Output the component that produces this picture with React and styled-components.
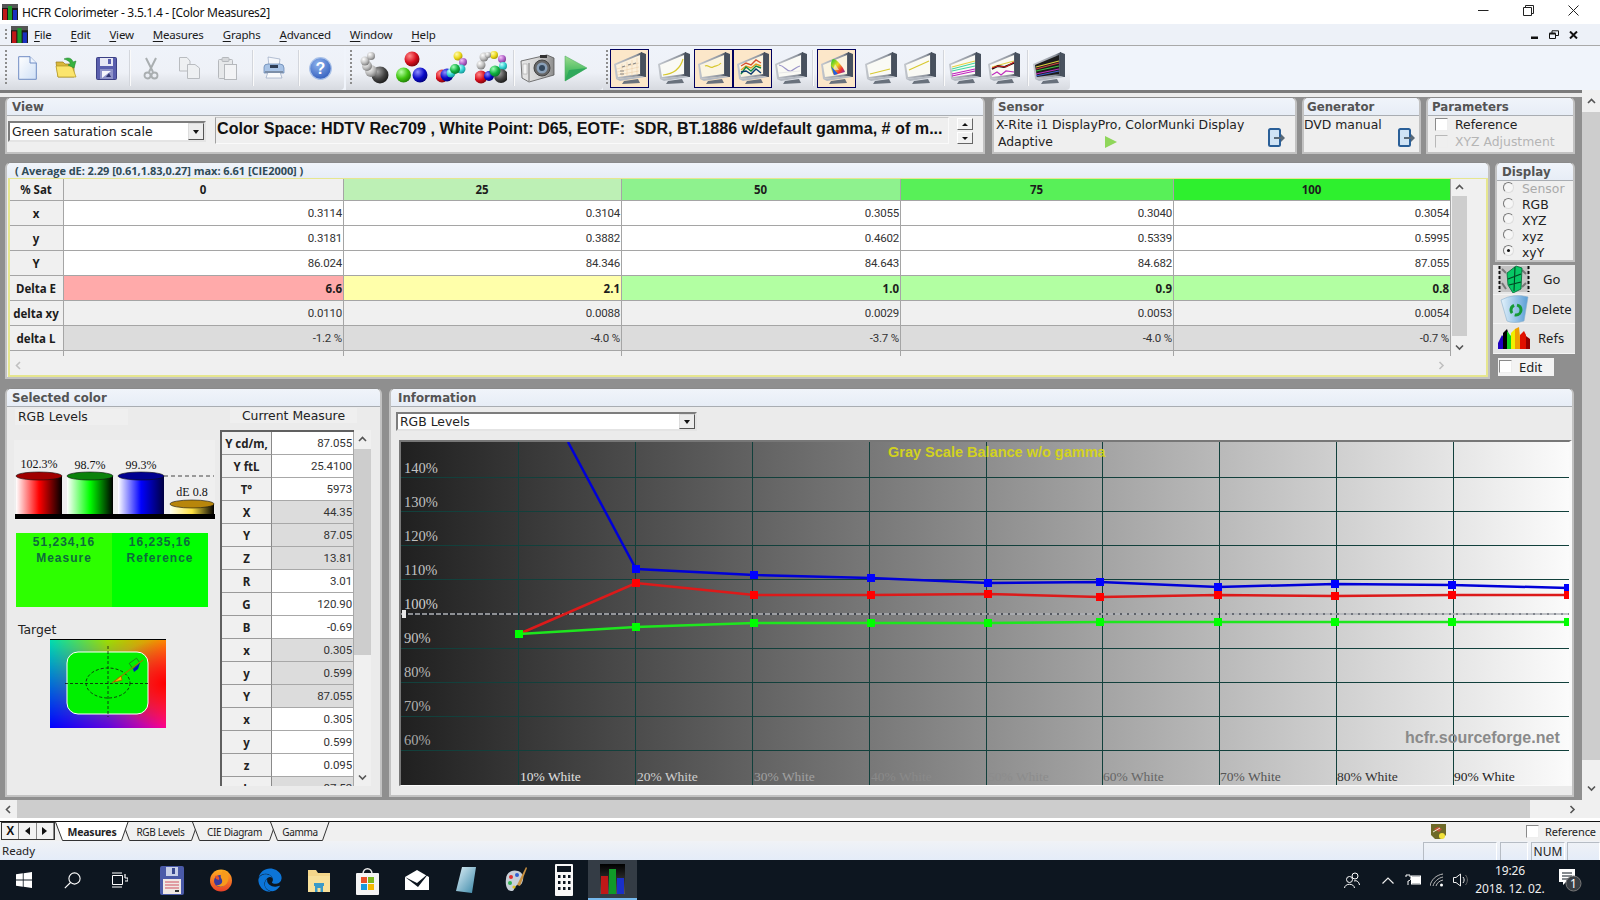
import React from "react";
import styled, { createGlobalStyle } from "styled-components";
import { FaEdge } from "react-icons/fa";

const Global = createGlobalStyle`
  html, body { margin: 0; padding: 0; background: #fff; }
  body { font-family: "Noto Sans", "Liberation Sans", sans-serif; color: #111; }
  * { box-sizing: border-box; }
`;

const SEGOE = `"Noto Sans", "Open Sans", sans-serif`;
const ROBOTO = `Roboto, "Noto Sans", sans-serif`;
const VERDANA = `"DejaVu Sans", "Liberation Sans", sans-serif`;

const Window = styled.div`
  width: 1600px; height: 900px; display: flex; flex-direction: column; overflow: hidden; background: #fff;
`;
const TitleBar = styled.div`
  height: 24px; flex: none; display: flex; align-items: center; background: #fff; padding-left: 2px;
`;
const TitleText = styled.span`
  font: 12px ${SEGOE}; margin-left: 4px; color: #111; letter-spacing: -0.28px; white-space: pre;
`;
const WinCtrls = styled.div`
  margin-left: auto; display: flex; align-items: center; height: 100%; padding-right: 4px;
`;
const WinCtrl = styled.div`
  width: 45px; height: 100%; display: flex; align-items: center; justify-content: center; margin-top: -4px;
`;
const MenuBar = styled.div`
  height: 22px; flex: none; display: flex; align-items: center; background: #edf1f8; border-bottom: 1px solid #a9a9a9; padding-left: 5px;
`;
const Grip = styled.div`
  width: 2px; height: ${p => p.$h}px; margin-left: ${p => p.$ml || 0}px; flex: none;
  background: repeating-linear-gradient(to bottom, #8d8d8d 0 2px, transparent 2px 4px);
`;
const MenuItems = styled.div`
  display: flex; gap: 19px; margin-left: 6px; font: 11.5px ${SEGOE}; color: #1a1a1a; letter-spacing: -0.2px;
  u { text-underline-offset: 2px; }
`;
const MdiCtrls = styled.div`
  margin-left: auto; display: flex; align-items: center; gap: 10px; padding-right: 22px;
`;
const ToolBarRow = styled.div`
  height: 44px; flex: none; display: flex; background: #f0f4fb;
`;
const ToolGroup = styled.div`
  width: ${p => p.$w}px; margin-left: ${p => p.$ml || 0}px; height: 44px; flex: none; display: flex; align-items: center;
  background: linear-gradient(to bottom, #eff3fa 0%, #eef1f7 60%, #d7dae0 100%);
  border-bottom-right-radius: 4px;
`;
const Tool = styled.div`
  width: ${p => p.$w}px; margin-left: ${p => p.$ml || 0}px; flex: none; display: flex; align-items: center; justify-content: center;
  svg { display: block; flex: none; }
`;
const ActiveTool = styled(Tool)`
  height: 39px; background: #fce7c9; border: 1px solid #00005e; margin-top: 0;
`;
const ToolSep = styled.div`
  width: 1px; height: 36px; margin-left: ${p => p.$ml}px; background: #d3d6dc; box-shadow: 1px 0 0 #fafafa; flex: none;
`;
const Workspace = styled.div`
  height: 710px; flex: none; display: flex;
`;
const MainPane = styled.div`
  width: 1582px; flex: none; background: #8f8f8f; border-top: 3px solid #7b7b7b; display: flex; flex-direction: column;
`;
const TopStrip = styled.div`
  height: 4px; background: #ececec; flex: none;
`;
const Panes = styled.div`
  display: flex; flex-direction: column; padding: 0 7px 0 5px; flex: 1;
`;
const SettingsRow = styled.div`
  display: flex; height: 57px; flex: none;
`;
const Panel = styled.div`
  width: ${p => p.$w}px; margin-left: ${p => p.$ml || 0}px; flex: none; display: flex; flex-direction: column;
  background: #efefef; border: 2px solid #c2c2c2; border-top: 1px solid #8a8a8a; border-radius: 6px 6px 0 0; overflow: hidden;
`;
const PanelHead = styled.div`
  height: 18px; flex: none; background: linear-gradient(to bottom, #f0f4fa, #e7edf6); border-bottom: 1px solid #a9adb2;
  font: bold 11.8px ${VERDANA}; color: #545454; padding: 2px 0 0 ${p => p.$pad ?? 5}px; line-height: 14px; white-space: pre;
`;
const ViewBody = styled.div`
  flex: 1; display: flex; padding: 5px 0 0 0; position: relative;
`;
const Combo = styled.div`
  width: ${p => p.$w}px; height: ${p => p.$h}px; flex: none; display: flex; align-items: center; background: #fff;
  border: 2px solid #7d7d7d; border-right-color: #e4e4e4; border-bottom-color: #e4e4e4;
  font: 12.4px ${VERDANA}; color: #222; padding-left: 2px; margin-left: ${p => p.$ml || 0}px; margin-top: ${p => p.$mt || 0}px;
`;
const ComboArrow = styled.div`
  margin-left: auto; width: 16px; height: 100%; flex: none; background: #ececec; border: 1px solid #555; border-top-color: #ddd; border-left-color: #ddd;
  display: flex; align-items: center; justify-content: center;
  &::after { content: ""; border-left: 3px solid transparent; border-right: 3px solid transparent; border-top: 4px solid #111; }
`;
const Readout = styled.div`
  width: 734px; height: 27px; margin-left: 9px; margin-top: -4px; flex: none; border-left: 1px solid #a0a0a0; border-top: 1px solid #c8c8c8; border-bottom: 1px solid #fafafa; border-right: 1px solid #fafafa;
  font: bold 16.15px "Liberation Sans", Arial, sans-serif; color: #111; padding: 0 0 0 1px; line-height: 20px; white-space: pre; overflow: hidden;
`;
const Spin = styled.div`
  display: flex; flex-direction: column; gap: 2px; margin-left: 8px; width: 16px; flex: none; margin-top: -3px;
`;
const SpinBtn = styled.div`
  height: 12px; background: #f1f1f1; border: 1px solid #fff; border-right-color: #666; border-bottom-color: #666;
  display: flex; align-items: center; justify-content: center;
  &::after {
    content: ""; border-left: 3px solid transparent; border-right: 3px solid transparent;
    ${p => (p.$up ? "border-bottom: 3px solid #111;" : "border-top: 3px solid #111;")}
  }
`;
const SmallBody = styled.div`
  flex: 1; position: relative; font: 12.4px ${VERDANA}; color: #222; padding: 0 0 0 ${p => p.$pad ?? 1}px; line-height: 16px;
`;
const Line = styled.div`
  white-space: pre; padding-left: ${p => p.$pl || 0}px; height: ${p => p.$h || 17}px; display: flex; align-items: center;
`;
const Corner = styled.div`
  position: absolute; right: ${p => p.$r ?? 2}px; bottom: 1px;
`;
const Check = styled.span`
  width: 13px; height: 13px; flex: none; display: inline-block; background: ${p => (p.$dim ? "#efefef" : "#fff")};
  border: 1px solid ${p => (p.$dim ? "#b8b8b8" : "#8a8a8a")}; border-right-color: #eee; border-bottom-color: #eee;
`;
const CheckRow = styled.div`
  display: flex; align-items: center; gap: 7px; padding-left: 7px; height: 17px; color: ${p => (p.$dim ? "#b5b5b5" : "#222")};
  font: 12.4px ${VERDANA};
`;
const TableRow = styled.div`
  display: flex; height: 217px; flex: none; margin-top: 8px;
`;
const TableStrip = styled.div`
  height: 15px; flex: none; background: linear-gradient(to bottom, #f0f4fa, #e7edf6);
  font: bold 11px "Open Sans", sans-serif; color: #2f4b57; padding: 1px 0 0 8px; line-height: 13px; white-space: pre; overflow: hidden; letter-spacing: -0.05px;
`;
const YellowFrame = styled.div`
  flex: 1; margin-left: 1px; border: 2px solid #e6e68f; border-top-width: 1px; display: flex; flex-direction: column; background: #f0f0f0; min-height: 0;
`;
const GridWrap = styled.div`
  display: flex; height: 177px; flex: none;
`;
const DataGrid = styled.div`
  width: 1441px; flex: none; display: grid; overflow: hidden; height: 177px;
  grid-template-columns: 54px 280px 278px 279px 273px 277px;
  grid-auto-rows: 25px; grid-template-rows: 22px;
`;
const Cell = styled.div`
  display: flex; align-items: center; justify-content: ${p => (p.$center ? "center" : "flex-end")};
  background: ${p => p.$bg || "#fff"}; padding-right: 1px; white-space: pre;
  border-bottom: 1px solid #a5a5a5; border-right: 1px solid #a5a5a5;
  ${p => (p.$bold
    ? `font: bold 11.5px ${SEGOE}; color: #1c1c1c;`
    : `font: 11.5px ${ROBOTO}; color: #333; letter-spacing: -0.2px;`)}
`;
const VBar = styled.div`
  width: ${p => p.$w || 17}px; flex: none; display: flex; flex-direction: column; align-items: center; background: ${p => p.$bg || "#f0f0f0"};
  margin-left: ${p => p.$ml || 0}px; height: ${p => (p.$h ? p.$h + "px" : "100%")};
`;
const BarArrow = styled.div`
  height: ${p => p.$h || 17}px; width: 100%; flex: none; display: flex; align-items: center; justify-content: center;
  margin-top: ${p => (p.$end ? "auto" : "0")};
`;
const BarThumb = styled.div`
  width: 100%; height: ${p => p.$h}px; background: #cdcdcd; flex: none;
`;
const HBar = styled.div`
  height: ${p => p.$h || 18}px; flex: none; display: flex; align-items: center; background: #f0f0f0;
`;
const HArrow = styled.div`
  width: 17px; height: 100%; flex: none; display: flex; align-items: center; justify-content: center; margin-left: ${p => (p.$end ? "auto" : "0")};
`;
const HThumb = styled.div`
  height: 100%; width: ${p => p.$w}px; background: #cdcdcd; flex: none;
`;
const GridFiller = styled.div`
  flex: 1; background: #f0f0f0;
`;
const SideCol = styled.div`
  width: 82px; margin-left: 3px; flex: none; display: flex; flex-direction: column;
`;
const DisplayPanel = styled(Panel)`
  height: 100px; margin-left: 2px; width: 80px;
`;
const RadioRow = styled.div`
  height: 16px; display: flex; align-items: center; gap: 8px; padding-left: 6px; font: 12.4px ${VERDANA}; color: ${p => (p.$dim ? "#aaa" : "#222")};
`;
const Radio = styled.span`
  width: 11px; height: 11px; border-radius: 50%; flex: none; background: #f6f6f6; border: 1px solid #777; border-right-color: #ddd; border-bottom-color: #ddd;
  display: flex; align-items: center; justify-content: center; margin-top: -3px;
  &::after { content: ""; width: 3px; height: 3px; border-radius: 50%; background: ${p => (p.$on ? "#111" : "transparent")}; }
`;
const SideBtns = styled.div`
  margin-top: 3px; display: flex; flex-direction: column; flex: none;
`;
const SideBtn = styled.div`
  height: 29.5px; background: #e6e6e6; border-bottom: 1px solid #f4f4f4; display: flex; align-items: center; font: 13px ${SEGOE}; color: #222; padding-left: ${p => p.$pl}px; gap: ${p => p.$gap}px;
  svg { flex: none; }
`;
const EditBox = styled.div`
  margin: 4px 0 0 5px; width: 56px; height: 18px; background: #f3f3f3; display: flex; align-items: center; gap: 7px; padding-left: 1px; font: 13px ${SEGOE}; color: #222;
`;
const BottomRow = styled.div`
  display: flex; height: 409px; flex: none; margin-top: 9px;
`;
const LeftBody = styled.div`
  flex: 1; display: flex; background: #ebebeb; min-height: 0;
`;
const LeftCol = styled.div`
  width: 213px; flex: none; padding: 2px 0 0 8px; display: flex; flex-direction: column;
`;
const LevelLabel = styled.div`
  width: 113px; height: 16px; background: #efefef; font: 12.4px ${VERDANA}; color: #222; padding-left: 3px; line-height: 16px;
`;
const CylWrap = styled.div`
  margin-top: 15px; margin-left: -1px; width: 201px; height: 80px; background: #efefef;
  svg { display: block; }
`;
const Swatch = styled.div`
  margin-top: 13px; margin-left: 1px; width: 192px; height: 74px; flex: none; display: flex;
`;
const SwatchHalf = styled.div`
  flex: 1; background: ${p => p.$bg}; display: flex; flex-direction: column; align-items: center; padding-top: 1px;
  font: bold 12px "Liberation Sans", sans-serif; color: #0d6b3c; letter-spacing: 1px; line-height: 16px;
`;
const TargetLabel = styled.div`
  margin-top: 15px; margin-left: 3px; font: 12.4px ${VERDANA}; color: #222; height: 16px; line-height: 16px;
`;
const TargetWrap = styled.div`
  margin-left: 35px; margin-top: 1px; svg { display: block; }
`;
const RightCol = styled.div`
  flex: 1; display: flex; flex-direction: column; padding-top: 1px; min-width: 0;
`;
const MeasureLabel = styled.div`
  width: 127px; height: 15px; margin-left: 10px; background: #efefef; font: 12.4px ${VERDANA}; color: #222; text-align: center; line-height: 15px; white-space: pre;
`;
const MeasureWrap = styled.div`
  margin-top: 7px; display: flex; height: 356px; flex: none; background: #f0f0f0; width: 151px;
`;
const MeasureGrid = styled.div`
  width: 134px; height: 356px; flex: none; overflow: hidden; border-left: 2px solid #606060; border-top: 2px solid #606060;
  display: grid; grid-template-columns: 50px 82px; grid-auto-rows: 23px;
`;
const MeasureHead = styled.div`
  background: #f0f0f0; border-right: 1px solid #8a8a8a; border-bottom: 1px solid #9a9a9a; display: flex; align-items: center; justify-content: center;
  font: bold 11.5px ${SEGOE}; color: #222; white-space: pre;
`;
const MeasureVal = styled.div`
  background: ${p => (p.$grey ? "#dcdcdc" : "#fff")}; border-bottom: 1px solid #a8a8a8; border-right: 1px solid #a8a8a8; display: flex; align-items: center; justify-content: flex-end;
  padding-right: 1px; font: 11.5px ${ROBOTO}; color: #333; letter-spacing: -0.1px;
`;
const InfoBody = styled.div`
  flex: 1; display: flex; flex-direction: column; background: #ebebeb; min-height: 0;
`;
const ChartFrame = styled.div`
  margin: 9px 0 0 8px; height: 346px; flex: none; width: 1173px; border-top: 2px solid #777; border-left: 2px solid #777; border-right: 3px solid #fafafa; background: #fff; border-bottom: 1px solid #fafafa;
`;
const ChartSvg = styled.svg`
  display: block; background: linear-gradient(to right, #202020 0%, #fbfbfb 100%);
`;
const ScrollGap = styled.div`
  height: 3px; flex: none;
`;
const TabBarRow = styled.div`
  height: 20px; flex: none; display: flex; align-items: stretch; background: #f0f0f0; border-top: 1px solid #111;
`;
const NavGroup = styled.div`
  display: flex; margin-left: 1px; height: 18px; border: 1px solid #333; flex: none; width: 54px;
`;
const NavBtn = styled.div`
  flex: 1; border-right: 1px solid #888; display: flex; align-items: center; justify-content: center; background: #f2f2f2; font: bold 12px "Liberation Sans", sans-serif; color: #111;
`;
const TabStrip = styled.div`
  display: flex; margin-left: 0;
`;
const Tab = styled.div`
  position: relative; width: ${p => p.$w}px; margin-left: ${p => p.$ml || 0}px; height: 19px; display: flex; align-items: center; justify-content: center;
  z-index: ${p => (p.$active ? 2 : 1)}; font: ${p => (p.$active ? "bold 10.5px" : "10px")} ${SEGOE}; color: #222; letter-spacing: ${p => (p.$active ? "-0.2px" : "-0.32px")};
  svg { position: absolute; inset: 0; }
  span { position: relative; }
`;
const TabRight = styled.div`
  margin-left: auto; display: flex; align-items: center; width: 169px; flex: none; padding-left: 0;
`;
const TabRefText = styled.span`
  font: 11px ${SEGOE}; color: #222; margin-left: 6px; letter-spacing: -0.1px;
`;
const TabCheck = styled(Check)`
  margin-left: 80px;
`;
const StatusBar = styled.div`
  height: 19px; flex: none; display: flex; align-items: center; background: linear-gradient(to bottom, #f0f2f6, #e4ecf8); font: 11.5px ${SEGOE}; color: #222; padding-left: 2px;
`;
const StatusPanes = styled.div`
  margin-left: auto; display: flex; height: 18px; align-self: flex-end;
`;
const StatusPane = styled.div`
  width: ${p => p.$w}px; margin-left: ${p => p.$ml || 0}px; border-top: 1px solid #b6bcc4; border-left: 1px solid #b6bcc4; border-right: 1px solid #fff; display: flex; align-items: center; justify-content: center;
  font: 12px ${SEGOE}; color: #222;
`;
const TaskBar = styled.div`
  height: 40px; flex: none; display: flex; align-items: center; background: #0d1620;
`;
const TaskSlot = styled.div`
  width: ${p => p.$w}px; height: 40px; flex: none; display: flex; align-items: center; justify-content: center; position: relative;
  background: ${p => (p.$active ? "#343c45" : "transparent")};
  ${p => (p.$active ? "border-bottom: 2px solid #76b9ed;" : "")}
  svg { display: block; }
`;
const Spacer = styled.div`
  width: ${p => p.$w}px; flex: none;
`;
const Tray = styled.div`
  margin-left: auto; display: flex; align-items: center; height: 40px; padding-right: 8px;
`;
const Clock = styled.div`
  width: 76px; display: flex; flex-direction: column; align-items: center; color: #eee; font: 12px ${SEGOE}; line-height: 18px; letter-spacing: -0.1px;
`;

/* ---------- icons ---------- */
const HcfrLogo = ({ s = 16 }) => (
  <svg width={s} height={s} viewBox="0 0 16 16">
    <rect width="16" height="16" fill="#1a1a1a" />
    <rect width="16" height="4" fill="#555" />
    <rect x="1" y="5" width="4" height="11" fill="#c01818" />
    <rect x="6" y="2" width="4" height="14" fill="#1a9a2a" />
    <rect x="11" y="6" width="4" height="10" fill="#1a30c0" />
  </svg>
);
const Chev = ({ d = "up", c = "#555" }) => {
  const paths = { up: "M1 5 L4.5 1.5 L8 5", down: "M1 1.5 L4.5 5 L8 1.5", left: "M5 1 L1.5 4.5 L5 8", right: "M1.5 1 L5 4.5 L1.5 8" };
  const box = d === "up" || d === "down" ? [9, 7] : [7, 9];
  return (
    <svg width={box[0]} height={box[1]} viewBox={`0 0 ${box[0]} ${box[1]}`}>
      <path d={paths[d]} fill="none" stroke={c} strokeWidth="1.6" />
    </svg>
  );
};
const DocIcon = () => (
  <svg width="19" height="24" viewBox="0 0 19 24">
    <defs><linearGradient id="docg" x1="0" y1="0" x2="1" y2="1"><stop offset="0" stopColor="#fff" /><stop offset="1" stopColor="#cfe0f6" /></linearGradient></defs>
    <path d="M.7.7H12L18.3 7V23.3H.7Z" fill="url(#docg)" stroke="#6f8cc4" />
    <path d="M12 .7V7H18.3" fill="#eef4fd" stroke="#6f8cc4" />
  </svg>
);
const FolderIcon = () => (
  <svg width="24" height="22" viewBox="0 0 24 22">
    <path d="M1 5 H8 L10 7 H19 V20 H3Z" fill="#d9b73a" stroke="#9a7d1a" strokeWidth=".7" />
    <path d="M3 20 L1 9 H17 L21 20Z" fill="#fbe56d" stroke="#b2961f" strokeWidth=".7" />
    <path d="M9 2 C13 0 17 1 18 5 L21 4 L19 11 L13 8 L15.5 6.7 C15 4.5 12 3 9 2Z" fill="#37b23f" stroke="#1f7f2a" strokeWidth=".5" />
  </svg>
);
const FloppyIcon = () => (
  <svg width="21" height="23" viewBox="0 0 21 23">
    <rect x=".5" y=".5" width="20" height="22" rx="1" fill="#5a5fae" stroke="#3c4085" />
    <rect x="4" y="1" width="13" height="8" fill="#e8e9f5" />
    <rect x="12" y="2" width="3" height="5" fill="#5a5fae" />
    <rect x="4" y="12" width="13" height="10" fill="#8e92c8" />
    <path d="M6 21 L6 14 H15 Z" fill="#f5f5fb" />
    <path d="M13 16 L15 20 H10Z" fill="#30346f" />
  </svg>
);
const ScissorsIcon = () => (
  <svg width="16" height="23" viewBox="0 0 16 23" fill="none" stroke="#a9aeb0">
    <path d="M3 1 L10 15 M13 1 L6 15" strokeWidth="2" />
    <circle cx="4.5" cy="18.5" r="3" strokeWidth="1.8" />
    <circle cx="11.5" cy="18.5" r="3" strokeWidth="1.8" />
  </svg>
);
const CopyIcon = () => (
  <svg width="21" height="22" viewBox="0 0 21 22" stroke="#b9bcc0" fill="#eef0f2">
    <path d="M.5.5H8L11 4V14H.5Z" />
    <path d="M8.5 7.5H16L20.5 11V21.5H8.5Z" />
  </svg>
);
const PasteIcon = () => (
  <svg width="19" height="23" viewBox="0 0 19 23" stroke="#b5b8bc" fill="#e6e8ea">
    <rect x=".5" y="2.5" width="14" height="19" rx="1" />
    <rect x="4" y=".5" width="7" height="4" rx="1" fill="#d5d7da" />
    <rect x="6.5" y="7.5" width="12" height="15" fill="#f2f3f5" />
  </svg>
);
const PrintIcon = () => (
  <svg width="24" height="24" viewBox="0 0 24 24">
    <path d="M6 1 L18 3 L17 10 H7Z" fill="#f5f7fb" stroke="#8a9ab8" strokeWidth=".6" />
    <path d="M2 11 Q2 8 6 8 H18 Q22 8 22 12 V17 H2Z" fill="#a8c3e6" stroke="#5e7fae" strokeWidth=".7" />
    <rect x="8" y="9" width="8" height="3" fill="#2e3d55" />
    <path d="M6 16 H18 L20 22 H4Z" fill="#f8f9fb" stroke="#8a9ab8" strokeWidth=".6" />
    <rect x="3" y="15" width="18" height="2" fill="#7d8fa8" />
  </svg>
);
const HelpIcon = () => (
  <svg width="23" height="23" viewBox="0 0 23 23">
    <defs><radialGradient id="hg" cx=".4" cy=".3" r=".8"><stop offset="0" stopColor="#8fb4ee" /><stop offset="1" stopColor="#2a56b8" /></radialGradient></defs>
    <circle cx="11.5" cy="11.5" r="10.8" fill="url(#hg)" stroke="#aac2e8" strokeWidth="1.2" />
    <text x="11.5" y="17" textAnchor="middle" fontFamily="Liberation Sans" fontWeight="700" fontSize="16" fill="#fff">?</text>
  </svg>
);
const BallDefs = () => (
  <defs>
    {[["r", "#ff8a8a", "#d80f1e", "#6a0008"], ["g", "#b8ffa8", "#3fc40f", "#1a7005"], ["b", "#8f8fff", "#0a0ac8", "#00006a"], ["w", "#ffffff", "#bcbcbc", "#6c6c6c"], ["k", "#a8a8a8", "#444", "#111"], ["y", "#fffbb0", "#ecd81a", "#9a8a00"], ["m", "#f4c4f8", "#b060c8", "#703080"], ["c", "#c8ffff", "#30d0d0", "#108888"], ["t", "#a0ffb8", "#10b040", "#086828"]].map(([id, a, b, c]) => (
      <radialGradient key={id} id={"ball-" + id} cx=".35" cy=".3" r=".8">
        <stop offset="0" stopColor={a} /><stop offset=".55" stopColor={b} /><stop offset="1" stopColor={c} />
      </radialGradient>
    ))}
  </defs>
);
const Balls = ({ w, items }) => (
  <svg width={w} height="34" viewBox={`0 0 ${w} 34`}>
    <BallDefs />
    {items.map(([k, x, y, r], i) => (
      <circle key={i} cx={x} cy={y} r={r} fill={`url(#ball-${k})`} />
    ))}
  </svg>
);
const CameraIcon = () => (
  <svg width="35" height="30" viewBox="0 0 35 30">
    <defs><linearGradient id="camg" x1="0" y1="0" x2="1" y2="0"><stop offset="0" stopColor="#e8e8e8" /><stop offset=".5" stopColor="#d4d4d4" /><stop offset="1" stopColor="#8c8c8c" /></linearGradient></defs>
    <path d="M1 8 L27 2 L34 5 V22 L9 29 L2 25Z" fill="url(#camg)" stroke="#555" strokeWidth=".8" />
    <path d="M9 10 V28" stroke="#777" />
    <rect x="3" y="11" width="4" height="10" fill="#f4f4f4" stroke="#999" strokeWidth=".5" />
    <circle cx="22" cy="15" r="8" fill="#666" stroke="#444" />
    <circle cx="22" cy="15" r="5.5" fill="#8aa0b8" />
    <circle cx="22" cy="15" r="3" fill="#33475c" />
    <rect x="20" y="2" width="7" height="3" fill="#333" />
  </svg>
);
const PlayIcon = () => (
  <svg width="24" height="27" viewBox="0 0 24 27">
    <defs><linearGradient id="pg" x1="0" y1="0" x2="0" y2="1"><stop offset="0" stopColor="#9ddc8e" /><stop offset=".5" stopColor="#5ac26a" /><stop offset="1" stopColor="#2fa855" /></linearGradient></defs>
    <path d="M1 1 L23 13 L1 26Z" fill="url(#pg)" stroke="#54b26a" strokeWidth=".6" />
    <path d="M1 26 L23 13 L5 15Z" fill="#30a95c" />
  </svg>
);
const Monitor = ({ screen = "#fafaf5", children }) => (
  <svg width="32" height="32" viewBox="0 0 32 32">
    <defs><linearGradient id="monb" x1="0" y1="0" x2="1" y2="0"><stop offset="0" stopColor="#c4c8ce" /><stop offset=".8" stopColor="#8e949e" /><stop offset="1" stopColor="#3e4754" /></linearGradient></defs>
    <path d="M27 0 L32 2 V25 L28 25Z" fill="#48515e" />
    <path d="M0 12 L28 0 V24 L2 27Z" fill="url(#monb)" />
    <path d="M2 13 L26 3 V22 L4 25Z" fill={screen} />
    {children}
    <path d="M2 27 L28 24 L31 25 L6 29Z" fill="#b4bac2" />
    <path d="M10 29 L24 27 L26 31 L8 32Z" fill="#69717c" />
  </svg>
);
const GridLines = () => (
  <g stroke="#e8c8a0" strokeWidth=".5" fill="none">
    <path d="M3 17 L25 11 M3 20 L25 15 M3 23 L25 19 M8 12 V25 M13 10 V24 M18 8 V24 M23 6 V23" />
    <path d="M8 15 l3 -1 M14 13 l3 -1 M19 12 l3 -1" stroke="#888" strokeWidth="1.2" />
    <path d="M6 19 h4 M6 22 h4" stroke="#888" strokeWidth="1.2" />
  </g>
);
const Pl = ({ d, c, w = 1.2 }) => <path d={d} fill="none" stroke={c} strokeWidth={w} />;
const CieShape = () => (
  <g>
    <defs><linearGradient id="cieg" x1="0" y1="0" x2="1" y2="1"><stop offset="0" stopColor="#10c030" /><stop offset=".4" stopColor="#e6e020" /><stop offset=".7" stopColor="#f03030" /><stop offset="1" stopColor="#5030d0" /></linearGradient></defs>
    <path d="M12 7 C16 7 22 15 24 20 L13 23 C9 18 9 10 12 7Z" fill="url(#cieg)" />
    <path d="M12 18 L14 12 L18 18Z" fill="#f4f4f4" opacity=".6" />
    <path d="M10 14 L13 23 L17 22Z" fill="#2060e0" />
  </g>
);
const FilmIcon = () => (
  <svg width="32" height="28" viewBox="0 0 32 28">
    <rect x="1" y="1" width="30" height="26" fill="#c4c4c4" />
    <path d="M1.5 1V27 M30.5 1V27" stroke="#111" strokeWidth="2" strokeDasharray="3 2" />
    <path d="M4 4 L8 8 M8 24 L4 18 M24 5 L28 9 M24 22 L28 18" stroke="#777" strokeWidth="2" />
    <path d="M9 8 L18 1 L24 3 L23 24 L15 28 L10 20Z" fill="#07c865" stroke="#063" strokeWidth=".8" />
    <path d="M10 14 L23 9 M11 20 L23 17 M17 2 L16 26" stroke="#042" strokeWidth="1.1" />
  </svg>
);
const BinIcon = () => (
  <svg width="29" height="28" viewBox="0 0 29 28">
    <defs><linearGradient id="bing" x1="0" y1="0" x2="1" y2="0"><stop offset="0" stopColor="#e4f2fb" /><stop offset="1" stopColor="#5a9ed6" /></linearGradient></defs>
    <path d="M1 5 Q14 -2 28 2 L24 26 Q14 29 7 26Z" fill="url(#bing)" stroke="#8cb0cc" strokeWidth=".6" />
    <circle cx="16" cy="15" r="5" fill="none" stroke="#159a36" strokeWidth="3" strokeDasharray="9 3" />
  </svg>
);
const SpectrumIcon = () => (
  <svg width="32" height="22" viewBox="0 0 32 22">
    <path d="M0 22 V16 L4 8 L7 12 V22Z" fill="#2000c0" />
    <path d="M5 22 V6 L9 2 L11 8 V22Z" fill="#000" />
    <path d="M9 22 V4 L13 9 V22Z" fill="#10d020" />
    <path d="M13 22 V6 L17 2 V22Z" fill="#f0f000" />
    <path d="M17 22 V2 L21 0 L22 10 V22Z" fill="#f0a000" />
    <path d="M22 22 V8 L26 4 L28 8 V22Z" fill="#e01000" />
    <path d="M28 22 V9 L32 12 V22Z" fill="#900000" />
  </svg>
);
const TabletArrow = () => (
  <svg width="19" height="19" viewBox="0 0 19 19">
    <rect x="2" y="1" width="11" height="17" rx="1.5" fill="#cfe3f5" stroke="#2a5f98" strokeWidth="2" />
    <path d="M7 9 H14 V6 L18 10 L14 14 V11 H7Z" fill="#5a6a78" />
  </svg>
);
const SmallPlay = () => (
  <svg width="12" height="12" viewBox="0 0 12 12"><path d="M0 0 L12 6 L0 12Z" fill="#8fd65a" /></svg>
);
const Cylinder = ({ x, grad, top, y = 36, w = 46, bottom = 74 }) => (
  <g>
    <rect x={x} y={y} width={w} height={bottom - y} fill={`url(#${grad})`} />
    <ellipse cx={x + w / 2} cy={y} rx={w / 2} ry="4" fill={top} stroke="#111" strokeWidth=".6" />
  </g>
);
const CylGrad = ({ id, a, b, c }) => (
  <linearGradient id={id}>
    <stop offset="0" stopColor={a} /><stop offset=".5" stopColor={b} /><stop offset="1" stopColor={c} />
  </linearGradient>
);
const Cylinders = () => (
  <svg width="201" height="80" viewBox="0 0 201 80">
    <defs>
      <CylGrad id="cr" a="#ffffff" b="#ff0000" c="#000" />
      <CylGrad id="cg" a="#ffffff" b="#00ff00" c="#000" />
      <CylGrad id="cb" a="#ffffff" b="#0000ff" c="#000040" />
      <CylGrad id="cy" a="#fffff0" b="#ffe040" c="#000" />
    </defs>
    <path d="M150 36 H200" stroke="#444" strokeWidth="1" strokeDasharray="4 3" />
    <Cylinder x={2} grad="cr" top="#a00000" />
    <Cylinder x={53} grad="cg" top="#0b820b" />
    <Cylinder x={104} grad="cb" top="#000090" />
    <Cylinder x={156} w={44} y={64} grad="cy" top="#b8860b" />
    <rect x="1" y="74" width="200" height="5" fill="#000" />
    <g fontFamily="Liberation Serif" fontSize="12" fill="#111" textAnchor="middle">
      <text x="25" y="28">102.3%</text>
      <text x="76" y="29">98.7%</text>
      <text x="127" y="29">99.3%</text>
      <text x="178" y="56">dE 0.8</text>
    </g>
  </svg>
);
const TargetPic = () => (
  <svg width="116" height="89" viewBox="0 0 116 89">
    <defs>
      <linearGradient id="tgTop"><stop offset="0" stopColor="#00e0b0" /><stop offset=".5" stopColor="#9fe000" /><stop offset="1" stopColor="#ff8a00" /></linearGradient>
      <linearGradient id="tgBot"><stop offset="0" stopColor="#0000ff" /><stop offset=".5" stopColor="#6000e0" /><stop offset="1" stopColor="#ff0090" /></linearGradient>
      <linearGradient id="tgFade" x1="0" y1="0" x2="0" y2="1"><stop offset="0" stopColor="#fff" stopOpacity="0" /><stop offset="1" stopColor="#fff" /></linearGradient>
      <mask id="tgMask"><rect width="116" height="89" fill="url(#tgFade)" /></mask>
      <radialGradient id="tgRed" cx="1" cy=".5" r=".5"><stop offset="0" stopColor="#ff0000" /><stop offset="1" stopColor="#ff0000" stopOpacity="0" /></radialGradient>
    </defs>
    <rect width="116" height="89" fill="url(#tgTop)" />
    <rect width="116" height="89" fill="url(#tgBot)" mask="url(#tgMask)" />
    <rect width="116" height="89" fill="url(#tgRed)" />
    <rect width="116" height="1" fill="#000" />
    <rect x="17" y="13" width="81" height="62" rx="11" fill="#00f000" stroke="#fff" strokeWidth="1" />
    <g fill="none" stroke="#111" strokeWidth=".8" strokeDasharray="3 2">
      <path d="M15 44.5 H100 M58 7 V78" />
      <ellipse cx="58" cy="44" rx="22" ry="15" />
      <rect x="80" y="21" width="9" height="6" transform="rotate(-35 85 24)" stroke="#333" strokeDasharray="none" strokeWidth=".5" />
    </g>
    <path d="M62 44 L93 21" stroke="#8a8a00" strokeWidth="1.2" />
    <path d="M64 43 L71 37 L72 41Z" fill="#f2c800" stroke="#c03000" strokeWidth=".6" />
    <path d="M83 30 L90 24 L88 30 L84 33Z" fill="#0018c0" />
  </svg>
);

const CHART_XS = [518, 635, 752, 869, 986, 1102, 1219, 1336, 1453];
const CHART_YS = [477, 511, 545, 579, 648, 682, 716, 750];
const MARK_XS = [519, 636, 754, 871, 988, 1100, 1218, 1335, 1452, 1568];
const SERIES = {
  blue: { c: "#0000d8", m: "#0000ff", ys: [null, 569, 575, 578, 583, 582, 587, 584, 585, 588] },
  red: { c: "#dc1a1a", m: "#ff0000", ys: [634, 583, 595, 595, 594, 597, 595, 596, 595, 595] },
  green: { c: "#1ee61e", m: "#00ff00", ys: [634, 627, 623, 623, 623, 622, 622, 622, 622, 622] },
};
const Y_LABELS = [["140%", 469, "#c4c4c4"], ["130%", 503, "#c0c0c0"], ["120%", 537, "#c0c0c0"], ["110%", 571, "#c4c4c4"], ["100%", 605, "#d0d0d0"], ["90%", 639, "#c4c4c4"], ["80%", 673, "#b8b8b8"], ["70%", 707, "#b0b0b0"], ["60%", 741, "#a8a8a8"]];
const X_LABELS = [["10% White", 520, "#e0e0e0"], ["20% White", 637, "#cfcfcf"], ["30% White", 754, "#a0a0a0"], ["40% White", 871, "#8a8a8a"], ["50% White", 988, "#8c8c8c"], ["60% White", 1103, "#666"], ["70% White", 1220, "#555"], ["80% White", 1337, "#333"], ["90% White", 1454, "#222"]];

const Chart = () => (
  <ChartSvg width="1168" height="343" viewBox="401 442 1168 343">
    <g stroke="#12403c" strokeWidth="1">
      {CHART_XS.map(x => <line key={x} x1={x + 0.5} y1="442" x2={x + 0.5} y2="785" />)}
      {CHART_YS.map(y => <line key={y} x1="401" y1={y + 0.5} x2="1570" y2={y + 0.5} />)}
    </g>
    <g fontFamily="Liberation Serif">
      {Y_LABELS.map(([t, y, c]) => <text key={t} x="404" y={y + 4} fill={c} fontSize="14.5">{t}</text>)}
      {X_LABELS.map(([t, x, c]) => <text key={t} x={x} y="781" fill={c} fontSize="13.5">{t}</text>)}
    </g>
    <line x1="401" y1="614" x2="1570" y2="614" stroke="#101828" strokeWidth="1" />
    <line x1="401" y1="614" x2="1570" y2="614" stroke="#fff" strokeWidth="1" strokeDasharray="5 2" />
    <rect x="402" y="610" width="4" height="8" fill="#e8e8e8" />
    <text x="888" y="457" fontFamily="Liberation Sans" fontWeight="700" fontSize="14.5" fill="#d2d21e">Gray Scale Balance w/o gamma</text>
    <text x="1405" y="743" fontFamily="Liberation Sans" fontWeight="700" fontSize="16" fill="#8a8a8a">hcfr.sourceforge.net</text>
    <polyline points={"568,442 " + MARK_XS.slice(1).map((x, i) => `${x},${SERIES.blue.ys[i + 1]}`).join(" ")} fill="none" stroke={SERIES.blue.c} strokeWidth="2.5" />
    <polyline points={MARK_XS.map((x, i) => `${x},${SERIES.red.ys[i]}`).join(" ")} fill="none" stroke={SERIES.red.c} strokeWidth="2.5" />
    <polyline points={MARK_XS.map((x, i) => `${x},${SERIES.green.ys[i]}`).join(" ")} fill="none" stroke={SERIES.green.c} strokeWidth="2.5" />
    {["blue", "red", "green"].map(k => MARK_XS.map((x, i) => (SERIES[k].ys[i] == null || (k === "red" && i === 0) ? null : (
      <rect key={k + i} x={x - 4} y={SERIES[k].ys[i] - 4} width="8" height="8" fill={SERIES[k].m} />
    ))))}
  </ChartSvg>
);

const TabShape = ({ w, fill }) => (
  <svg width={w} height="19" viewBox={`0 0 ${w} 19`}>
    <path d={`M.5 0 L7.5 18.5 H${w - 7.5} L${w - 1} 0`} fill={fill} stroke="#333" strokeWidth="1" />
  </svg>
);

const GRID_COLS = ["0", "25", "50", "75", "100"];
const HEAD_BG = ["#f0f0f0", "#bdf0b5", "#8ef28e", "#58f058", "#2ef02e"];
const ROWS = [
  { h: "x", v: ["0.3114", "0.3104", "0.3055", "0.3040", "0.3054"] },
  { h: "y", v: ["0.3181", "0.3882", "0.4602", "0.5339", "0.5995"] },
  { h: "Y", v: ["86.024", "84.346", "84.643", "84.682", "87.055"] },
  { h: "Delta E", v: ["6.6", "2.1", "1.0", "0.9", "0.8"], bg: ["#ffaaaa", "#ffffaa", "#b2ffa2", "#b2ffa2", "#b2ffa2"], bold: true },
  { h: "delta xy", v: ["0.0110", "0.0088", "0.0029", "0.0053", "0.0054"], bg: Array(5).fill("#f0f0f0") },
  { h: "delta L", v: ["-1.2 %", "-4.0 %", "-3.7 %", "-4.0 %", "-0.7 %"], bg: Array(5).fill("#dcdcdc") },
];
const MEASURE = [
  ["Y cd/m,", "87.055"], ["Y ftL", "25.4100"], ["T°", "5973"], ["X", "44.35", 1], ["Y", "87.05", 1], ["Z", "13.81", 1],
  ["R", "3.01"], ["G", "120.90"], ["B", "-0.69"], ["x", "0.305", 1], ["y", "0.599", 1], ["Y", "87.055", 1],
  ["x", "0.305"], ["y", "0.599"], ["z", "0.095"], ["L", "87.52", 1],
];

export default function App() {
  return (
    <Window>
      <Global />
      <TitleBar>
        <HcfrLogo />
        <TitleText>HCFR Colorimeter - 3.5.1.4 - [Color Measures2]</TitleText>
        <WinCtrls>
          <WinCtrl><svg width="11" height="11" viewBox="0 0 11 11"><path d="M0 5.5H10.5" stroke="#222" /></svg></WinCtrl>
          <WinCtrl><svg width="11" height="11" viewBox="0 0 11 11" fill="none" stroke="#222"><path d="M.5 2.5H8.5V10.5H.5Z M2.5 2.5V.5H10.5V8.5H8.5" /></svg></WinCtrl>
          <WinCtrl><svg width="11" height="11" viewBox="0 0 11 11" stroke="#222"><path d="M.5.5 L10.5 10.5 M10.5.5 L.5 10.5" /></svg></WinCtrl>
        </WinCtrls>
      </TitleBar>
      <MenuBar>
        <Grip $h={12} />
        <Tool $w={17} $ml={4}><HcfrLogo s={17} /></Tool>
        <MenuItems>
          <span><u>F</u>ile</span><span><u>E</u>dit</span><span><u>V</u>iew</span><span><u>M</u>easures</span>
          <span><u>G</u>raphs</span><span><u>A</u>dvanced</span><span><u>W</u>indow</span><span><u>H</u>elp</span>
        </MenuItems>
        <MdiCtrls>
          <svg width="8" height="8" viewBox="0 0 8 8"><rect y="5.5" width="7" height="2.5" fill="#111" /></svg>
          <svg width="10" height="9" viewBox="0 0 10 9" fill="none" stroke="#111"><path d="M.5 3.5H6.5V8.5H.5Z M3 3V.8H9.5V5.5H7" /><path d="M.5 3.5H6.5" strokeWidth="2" /></svg>
          <svg width="9" height="8" viewBox="0 0 9 8" stroke="#111" strokeWidth="2"><path d="M1 .5 L8 7.5 M8 .5 L1 7.5" /></svg>
        </MdiCtrls>
      </MenuBar>
      <ToolBarRow>
        <ToolGroup $w={344}>
          <Grip $h={36} $ml={5} />
          <Tool $w={19} $ml={11}><DocIcon /></Tool>
          <Tool $w={24} $ml={18}><FolderIcon /></Tool>
          <Tool $w={21} $ml={17}><FloppyIcon /></Tool>
          <ToolSep $ml={12} />
          <Tool $w={16} $ml={13}><ScissorsIcon /></Tool>
          <Tool $w={21} $ml={20}><CopyIcon /></Tool>
          <Tool $w={19} $ml={18}><PasteIcon /></Tool>
          <ToolSep $ml={15} />
          <Tool $w={24} $ml={9}><PrintIcon /></Tool>
          <ToolSep $ml={12} />
          <Tool $w={23} $ml={10}><HelpIcon /></Tool>
        </ToolGroup>
        <ToolGroup $w={257} $ml={2}>
          <Grip $h={36} $ml={4} />
          <Tool $w={30} $ml={7}>
            <Balls w={30} items={[["k", 21, 24, 8.5], ["w", 12, 20, 6], ["w", 8, 15, 5], ["w", 6, 10, 4.5], ["w", 12, 5, 4]]} />
          </Tool>
          <Tool $w={32} $ml={7}>
            <Balls w={32} items={[["r", 16, 8, 7.5], ["g", 7.5, 24, 7.5], ["b", 24, 24, 7.5]]} />
          </Tool>
          <Tool $w={32} $ml={8}>
            <Balls w={32} items={[["y", 22, 5, 4.5], ["m", 27, 11, 4], ["c", 25, 18, 4.5], ["r", 6, 25, 6.5], ["b", 11, 24, 6.5], ["c", 15, 22, 4.5], ["t", 19, 18, 5]]} />
          </Tool>
          <Tool $w={32} $ml={7}>
            <Balls w={32} items={[["w", 6, 14, 4.5], ["w", 9, 6, 4.5], ["y", 19, 4, 4], ["m", 27, 8, 4], ["c", 28, 15, 4], ["k", 26, 25, 7], ["r", 6, 26, 6.5], ["b", 14, 25, 5], ["t", 20, 20, 5.5], ["w", 13, 4, 3]]} />
          </Tool>
          <ToolSep $ml={6} />
          <Tool $w={35} $ml={6}><CameraIcon /></Tool>
          <Tool $w={24} $ml={9}><PlayIcon /></Tool>
        </ToolGroup>
        <ToolGroup $w={467}>
          <Grip $h={36} $ml={3} />
          <ActiveTool $w={39} $ml={2}><Monitor screen="#fbf0dc"><GridLines /></Monitor></ActiveTool>
          <Tool $w={32} $ml={9}><Monitor><Pl d="M5 23 C15 22 22 18 25 7" c="#d8c830" /></Monitor></Tool>
          <ActiveTool $w={39} $ml={4}><Monitor screen="#fbf4e0"><Pl d="M7 14 C10 12 12 17 15 15 C18 13 20 15 23 11" c="#d8c830" /></Monitor></ActiveTool>
          <ActiveTool $w={39}><Monitor screen="#fbf4e0">
            <Pl d="M4 14 L9 11 L14 13 L19 8 L24 11" c="#d85030" w={1.4} />
            <Pl d="M4 18 L9 14 L14 16 L19 12 L24 14" c="#e0a020" w={1.4} />
            <Pl d="M4 22 L9 15 L14 19 L19 14 L24 16" c="#108840" w={1.4} />
            <Pl d="M4 20 L9 19 L14 22 L19 17 L24 21" c="#0a3a70" w={1.4} />
          </Monitor></ActiveTool>
          <Tool $w={32} $ml={3}><Monitor><Pl d="M4 13 C10 14 12 20 16 19 C19 18 21 15 25 14" c="#9a94c8" /><Pl d="M4 21 L25 19" c="#e8e8e8" /></Monitor></Tool>
          <ToolSep $ml={5} />
          <ActiveTool $w={39} $ml={4}><Monitor screen="#fbf4e0"><CieShape /></Monitor></ActiveTool>
          <Tool $w={32} $ml={9}><Monitor><Pl d="M5 22 L25 17" c="#d8c830" /></Monitor></Tool>
          <Tool $w={32} $ml={7}><Monitor><Pl d="M5 18 L25 9" c="#d8c830" /></Monitor></Tool>
          <ToolSep $ml={7} />
          <Tool $w={32} $ml={5}><Monitor>
            <Pl d="M3 15 L26 9" c="#e8d040" /><Pl d="M3 17 L26 11" c="#40d8a0" /><Pl d="M3 19 L26 14" c="#40d8a0" />
            <Pl d="M3 22 L26 17" c="#c020c0" /><Pl d="M3 24 L26 19" c="#c020c0" />
          </Monitor></Tool>
          <Tool $w={32} $ml={7}><Monitor>
            <Pl d="M4 15 L26 9" c="#e0d040" /><Pl d="M4 17 L10 14 L16 15 L26 11" c="#111" w={1.8} /><Pl d="M4 16 L10 14 L18 15 L26 10" c="#d02020" />
            <Pl d="M4 23 L9 20 L13 23 L18 19 L26 20" c="#c030c0" />
          </Monitor></Tool>
          <ToolSep $ml={7} />
          <Tool $w={32} $ml={5}><Monitor screen="#1c1c1c">
            <Pl d="M3 15 L26 9" c="#e0d040" /><Pl d="M3 17 L26 11" c="#d04040" /><Pl d="M3 19 L26 14" c="#40c040" />
            <Pl d="M3 22 L26 17" c="#c030c0" /><Pl d="M3 24 L26 19" c="#4060d0" />
          </Monitor></Tool>
        </ToolGroup>
      </ToolBarRow>
      <Workspace>
        <MainPane>
          <TopStrip />
          <Panes>
            <SettingsRow>
              <Panel $w={980}>
                <PanelHead>View</PanelHead>
                <ViewBody>
                  <Combo $w={198} $h={21} $ml={1}>Green saturation scale<ComboArrow /></Combo>
                  <Readout>Color Space: HDTV Rec709 , White Point: D65, EOTF:  SDR, BT.1886 w/default gamma, # of m...</Readout>
                  <Spin><SpinBtn $up /><SpinBtn /></Spin>
                </ViewBody>
              </Panel>
              <Panel $w={305} $ml={7}>
                <PanelHead $pad={4}>Sensor</PanelHead>
                <SmallBody $pad={2}>
                  <Line>X-Rite i1 DisplayPro, ColorMunki Display</Line>
                  <Line $pl={2}>Adaptive<Spacer $w={52} /><SmallPlay /></Line>
                  <Corner $r={9}><TabletArrow /></Corner>
                </SmallBody>
              </Panel>
              <Panel $w={119} $ml={5}>
                <PanelHead $pad={3}>Generator</PanelHead>
                <SmallBody $pad={0}>
                  <Line>DVD manual</Line>
                  <Corner $r={3}><TabletArrow /></Corner>
                </SmallBody>
              </Panel>
              <Panel $w={149} $ml={5}>
                <PanelHead $pad={4}>Parameters</PanelHead>
                <SmallBody $pad={0}>
                  <CheckRow><Check />Reference</CheckRow>
                  <CheckRow $dim><Check $dim />XYZ Adjustment</CheckRow>
                </SmallBody>
              </Panel>
            </SettingsRow>
            <TableRow>
              <Panel $w={1485}>
                <TableStrip>( Average dE: 2.29 [0.61,1.83,0.27] max: 6.61 [CIE2000] )</TableStrip>
                <YellowFrame>
                  <GridWrap>
                    <DataGrid>
                      <Cell $center $bold $bg="#f0f0f0">% Sat</Cell>
                      {GRID_COLS.map((c, i) => <Cell key={c} $center $bold $bg={HEAD_BG[i]}>{c}</Cell>)}
                      {ROWS.map(r => (
                        <React.Fragment key={r.h}>
                          <Cell $center $bold $bg="#f0f0f0">{r.h}</Cell>
                          {r.v.map((v, i) => <Cell key={i} $bg={r.bg ? r.bg[i] : "#fff"} $bold={r.bold}>{v}</Cell>)}
                        </React.Fragment>
                      ))}
                      <Cell $bg="#f0f0f0" />
                      {GRID_COLS.map(c => <Cell key={c} $bg="#f0f0f0" />)}
                    </DataGrid>
                    <VBar $w={15} $ml={1}>
                      <BarArrow><Chev d="up" /></BarArrow>
                      <BarThumb $h={140} />
                      <BarArrow $end><Chev d="down" /></BarArrow>
                    </VBar>
                    <GridFiller />
                  </GridWrap>
                  <HBar $h={19}>
                    <HArrow><Chev d="left" c="#c0c0c0" /></HArrow>
                    <HArrow $end><Chev d="right" c="#c0c0c0" /></HArrow>
                    <Spacer $w={36} />
                  </HBar>
                </YellowFrame>
              </Panel>
              <SideCol>
                <DisplayPanel>
                  <PanelHead>Display</PanelHead>
                  <RadioRow $dim><Radio />Sensor</RadioRow>
                  <RadioRow><Radio />RGB</RadioRow>
                  <RadioRow><Radio />XYZ</RadioRow>
                  <RadioRow><Radio />xyz</RadioRow>
                  <RadioRow><Radio $on />xyY</RadioRow>
                </DisplayPanel>
                <SideBtns>
                  <SideBtn $pl={5} $gap={13}><FilmIcon />Go</SideBtn>
                  <SideBtn $pl={7} $gap={3}><BinIcon />Delete</SideBtn>
                  <SideBtn $pl={5} $gap={8}><SpectrumIcon />Refs</SideBtn>
                </SideBtns>
                <EditBox><Check />Edit</EditBox>
              </SideCol>
            </TableRow>
            <BottomRow>
              <Panel $w={377}>
                <PanelHead $pad={5}>Selected color</PanelHead>
                <LeftBody>
                  <LeftCol>
                    <LevelLabel>RGB Levels</LevelLabel>
                    <CylWrap><Cylinders /></CylWrap>
                    <Swatch>
                      <SwatchHalf $bg="#2dff00"><span>51,234,16</span><span>Measure</span></SwatchHalf>
                      <SwatchHalf $bg="#00ff00"><span>16,235,16</span><span>Reference</span></SwatchHalf>
                    </Swatch>
                    <TargetLabel>Target</TargetLabel>
                    <TargetWrap><TargetPic /></TargetWrap>
                  </LeftCol>
                  <RightCol>
                    <MeasureLabel>Current Measure</MeasureLabel>
                    <MeasureWrap>
                      <MeasureGrid>
                        {MEASURE.map(([h, v, g], i) => (
                          <React.Fragment key={i}>
                            <MeasureHead>{h}</MeasureHead>
                            <MeasureVal $grey={!!g}>{v}</MeasureVal>
                          </React.Fragment>
                        ))}
                      </MeasureGrid>
                      <VBar $w={17}>
                        <BarArrow $h={19}><Chev d="up" /></BarArrow>
                        <BarThumb $h={206} />
                        <BarArrow $h={17} $end><Chev d="down" /></BarArrow>
                      </VBar>
                    </MeasureWrap>
                  </RightCol>
                </LeftBody>
              </Panel>
              <Panel $w={1185} $ml={7}>
                <PanelHead $pad={7}>Information</PanelHead>
                <InfoBody>
                  <Combo $w={301} $h={19} $ml={5} $mt={5}>RGB Levels<ComboArrow /></Combo>
                  <ChartFrame><Chart /></ChartFrame>
                </InfoBody>
              </Panel>
            </BottomRow>
          </Panes>
        </MainPane>
        <VBar $w={18}>
          <BarArrow $h={22}><Chev d="up" /></BarArrow>
          <BarThumb $h={648} />
          <BarArrow $end $h={24}><Chev d="down" /></BarArrow>
        </VBar>
      </Workspace>
      <HBar>
        <HArrow><Chev d="left" /></HArrow>
        <HThumb $w={1513} />
        <HArrow $end><Chev d="right" /></HArrow>
        <Spacer $w={19} />
      </HBar>
      <ScrollGap />
      <TabBarRow>
        <NavGroup>
          <NavBtn>X</NavBtn>
          <NavBtn><svg width="5" height="8" viewBox="0 0 5 8"><path d="M5 0V8L0 4Z" fill="#111" /></svg></NavBtn>
          <NavBtn><svg width="5" height="8" viewBox="0 0 5 8"><path d="M0 0V8L5 4Z" fill="#111" /></svg></NavBtn>
        </NavGroup>
        <TabStrip>
          <Tab $w={74} $active><TabShape w={74} fill="#fff" /><span>Measures</span></Tab>
          <Tab $w={77} $ml={-7}><TabShape w={77} fill="#f0f0f0" /><span>RGB Levels</span></Tab>
          <Tab $w={85} $ml={-7}><TabShape w={85} fill="#f0f0f0" /><span>CIE Diagram</span></Tab>
          <Tab $w={60} $ml={-7}><TabShape w={60} fill="#f0f0f0" /><span>Gamma</span></Tab>
        </TabStrip>
        <TabRight>
          <svg width="15" height="15" viewBox="0 0 15 15">
            <path d="M0 0H15V11L11 15H4L0 11Z" fill="#6e6a28" />
            <path d="M3 5 L7 3 L11 5 L8 8Z" fill="#c8503a" />
            <path d="M2 8 L9 4" stroke="#f0e8d0" />
            <circle cx="11" cy="12" r="3" fill="#f2e23a" />
          </svg>
          <TabCheck />
          <TabRefText>Reference</TabRefText>
        </TabRight>
      </TabBarRow>
      <StatusBar>
        Ready
        <StatusPanes>
          <StatusPane $w={74} />
          <StatusPane $w={28} $ml={3} />
          <StatusPane $w={34} $ml={3}>NUM</StatusPane>
          <StatusPane $w={33} $ml={2} />
        </StatusPanes>
      </StatusBar>
      <TaskBar>
        <TaskSlot $w={48}>
          <svg width="16" height="16" viewBox="0 0 16 16"><path d="M0 2.3 L6.8 1.3 V7.5 H0Z M7.6 1.2 L16 0 V7.5 H7.6Z M0 8.4 H6.8 V14.7 L0 13.7Z M7.6 8.4 H16 V16 L7.6 14.8Z" fill="#fff" /></svg>
        </TaskSlot>
        <TaskSlot $w={48}>
          <svg width="17" height="17" viewBox="0 0 17 17" fill="none" stroke="#fff" strokeWidth="1.1"><circle cx="10.5" cy="6.5" r="5.6" /><path d="M6.5 10.5 L.8 16.2" /></svg>
        </TaskSlot>
        <TaskSlot $w={48}>
          <svg width="16" height="16" viewBox="0 0 16 16" fill="none" stroke="#fff"><path d="M.5 3.5H10.5V12.5H.5Z M0 1H10 M0 15H10" /><path d="M13 2V6 M13 9H16V6H13" strokeWidth="1.2" /></svg>
        </TaskSlot>
        <Spacer $w={3} />
        <TaskSlot $w={49}>
          <svg width="24" height="29" viewBox="0 0 24 29">
            <rect width="24" height="29" rx="2" fill="#4a5aa8" />
            <rect x="6" y="1" width="12" height="9" fill="#c8d0e8" />
            <rect x="12" y="2" width="3" height="6" fill="#3a4a90" />
            <rect x="3" y="13" width="18" height="15" fill="#f0e8e4" />
            <path d="M5 16H19 M5 19H19 M5 22H19" stroke="#d05060" />
            <path d="M15 25H19" stroke="#333" strokeWidth="2" />
          </svg>
        </TaskSlot>
        <TaskSlot $w={49}>
          <svg width="24" height="24" viewBox="0 0 24 24">
            <defs><linearGradient id="ffg" x1="0" y1="0" x2="0" y2="1"><stop offset="0" stopColor="#ffb020" /><stop offset="1" stopColor="#e8402a" /></linearGradient></defs>
            <circle cx="12" cy="12.5" r="11" fill="url(#ffg)" />
            <circle cx="11" cy="13" r="6" fill="#3a3a9c" />
            <path d="M14 2 C20 5 20 10 19 13 C17 19 11 20 7 17 C12 18 15 14 12 10 C11 7 13 4 14 2Z" fill="#f79a1c" />
            <path d="M6 8 C9 7 11 9 10 12 L7 11Z" fill="#e8502a" />
          </svg>
        </TaskSlot>
        <TaskSlot $w={49}><FaEdge size={24} color="#0c75d8" /></TaskSlot>
        <TaskSlot $w={49}>
          <svg width="22" height="23" viewBox="0 0 22 23">
            <path d="M0 1 H8 L10 4 H22 V23 H0Z" fill="#f4d68a" />
            <path d="M0 7 H22 V23 H0Z" fill="#f8e09a" />
            <path d="M7 23 V17 H15 V23 H12.5 V19 H9.5 V23Z" fill="#3a9ac8" />
            <path d="M6 17 H16 V14 H6Z" fill="#3a9ac8" />
          </svg>
        </TaskSlot>
        <TaskSlot $w={49}>
          <svg width="23" height="30" viewBox="0 0 23 30">
            <path d="M7 9 C7 2 16 2 16 9" fill="none" stroke="#eee" strokeWidth="1.5" />
            <rect y="8" width="23" height="22" rx="1" fill="#f4f4f4" />
            <rect x="5" y="12" width="6" height="6" fill="#e8502a" />
            <rect x="12" y="12" width="6" height="6" fill="#7db81e" />
            <rect x="5" y="19" width="6" height="6" fill="#1a9ae0" />
            <rect x="12" y="19" width="6" height="6" fill="#f5b800" />
          </svg>
        </TaskSlot>
        <TaskSlot $w={49}>
          <svg width="24" height="20" viewBox="0 0 24 20">
            <path d="M0 7 L12 0 L24 7 V20 H0Z" fill="#fff" />
            <path d="M0 7 L12 13 L24 3 L13 17Z" fill="#0d1620" />
          </svg>
        </TaskSlot>
        <TaskSlot $w={49}>
          <svg width="22" height="28" viewBox="0 0 22 28">
            <defs><linearGradient id="notg" x1="0" y1="0" x2="1" y2="1"><stop offset="0" stopColor="#dff0f8" /><stop offset="1" stopColor="#3a88a8" /></linearGradient></defs>
            <path d="M7 1 L21 1 L17 27 L1 25Z" fill="url(#notg)" />
          </svg>
        </TaskSlot>
        <TaskSlot $w={49}>
          <svg width="24" height="30" viewBox="0 0 24 30">
            <path d="M3 14 C3 7 10 4 15 6 C21 8 21 14 19 18 C17 22 16 18 13 21 C10 24 12 26 8 26 C4 26 2 20 3 14Z" fill="#c8d0d8" />
            <circle cx="8" cy="12" r="2" fill="#e03030" /><circle cx="14" cy="10" r="2" fill="#3060d0" /><circle cx="7" cy="18" r="2" fill="#30b050" /><circle cx="11" cy="22" r="1.6" fill="#e0c020" />
            <path d="M14 20 L23 2 L24 3 L17 21Z" fill="#c89040" />
          </svg>
        </TaskSlot>
        <TaskSlot $w={49}>
          <svg width="18" height="32" viewBox="0 0 18 32">
            <rect width="18" height="32" rx="1" fill="#f8f8f8" />
            <rect x="2" y="2" width="14" height="6" fill="#0d1620" />
            {[11, 17, 23].map(y => [3, 8, 13].map(x => <rect key={x + "-" + y} x={x} y={y} width="2.5" height="3" fill="#0d1620" />))}
          </svg>
        </TaskSlot>
        <TaskSlot $w={49} $active>
          <svg width="25" height="30" viewBox="0 0 25 30">
            <defs><linearGradient id="hcf" x1="0" y1="0" x2="0" y2="1"><stop offset="0" stopColor="#000" /><stop offset="1" stopColor="#555" /></linearGradient></defs>
            <rect width="25" height="30" fill="url(#hcf)" />
            <rect x="1" y="12" width="7" height="18" fill="#c01818" />
            <rect x="9" y="5" width="7" height="25" fill="#109a28" />
            <rect x="17" y="14" width="7" height="16" fill="#1a30c8" />
          </svg>
        </TaskSlot>
        <Tray>
          <TaskSlot $w={44}>
            <svg width="16" height="17" viewBox="0 0 16 17" fill="none" stroke="#fff"><circle cx="5.5" cy="7.5" r="3" /><path d="M.5 16 C1 11 10 11 10.5 16" /><circle cx="11" cy="4" r="3" /><path d="M10 9 C13 8 15 10 15.5 13" /></svg>
          </TaskSlot>
          <TaskSlot $w={28}>
            <svg width="12" height="7" viewBox="0 0 12 7" fill="none" stroke="#eee"><path d="M.5 6.5 L6 1 L11.5 6.5" strokeWidth="1.2" /></svg>
          </TaskSlot>
          <TaskSlot $w={22}>
            <svg width="16" height="12" viewBox="0 0 16 12"><path d="M0 2H2V0M4 0V2H6V4C6 6 4 7 3 7 V11" stroke="#fff" fill="none" /><rect x="7" y="2.5" width="8" height="7" fill="#fff" /><rect x="6.5" y="2" width="9" height="8" fill="none" stroke="#fff" /></svg>
          </TaskSlot>
          <TaskSlot $w={26}>
            <svg width="14" height="14" viewBox="0 0 14 14" fill="none" stroke="#bbb"><path d="M0 13 C1 7 6 2 13 1 M3 13 C4 9 8 5 13 4 M6 13 C7 10 9 8 13 7" /><circle cx="11.5" cy="12" r="1.5" fill="#fff" stroke="none" /></svg>
          </TaskSlot>
          <TaskSlot $w={22}>
            <svg width="16" height="14" viewBox="0 0 16 14" fill="none" stroke="#eee"><path d="M.5 4.5H3L7.5 1V13L3 9.5H.5Z" /><path d="M10 4 C11.5 6 11.5 8 10 10" /><path d="M12.5 2 C15 5 15 9 12.5 12" stroke="#666" /></svg>
          </TaskSlot>
          <Clock><span>19:26</span><span>2018. 12. 02.</span></Clock>
          <TaskSlot $w={44}>
            <svg width="24" height="24" viewBox="0 0 24 24">
              <path d="M1 1H17V14H8L5 17V14H1Z" fill="#fff" />
              <path d="M4 5H14M4 8H14M4 11H11" stroke="#0d1620" />
              <circle cx="15.5" cy="15.5" r="7.5" fill="#3a3f45" stroke="#777" />
              <text x="15.5" y="20" textAnchor="middle" fontFamily="Noto Sans" fontSize="12" fill="#fff">1</text>
            </svg>
          </TaskSlot>
        </Tray>
      </TaskBar>
    </Window>
  );
}
